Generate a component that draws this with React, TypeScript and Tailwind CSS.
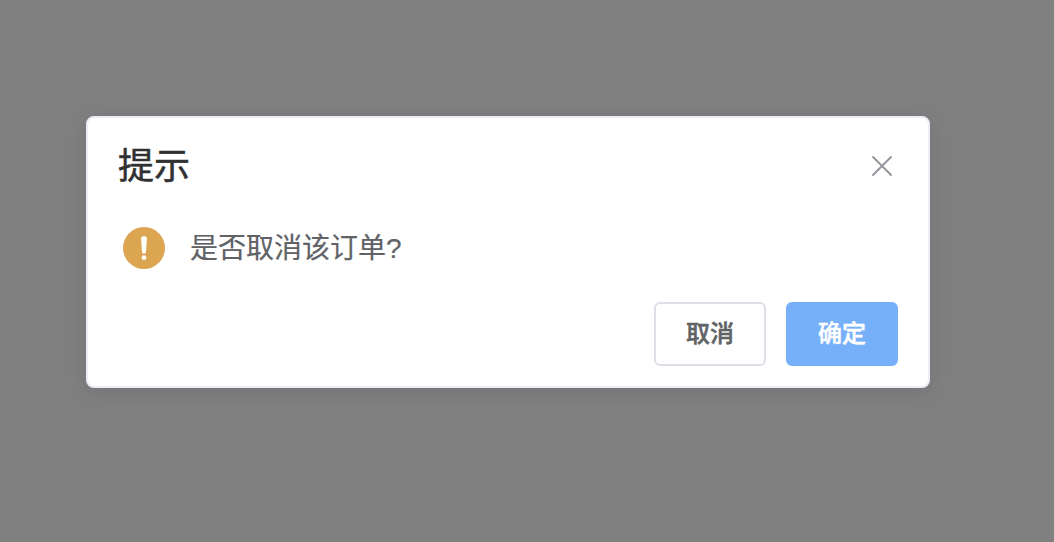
import type { ReactNode } from "react";

interface DialogButtonProps {
  primary?: boolean;
  children: ReactNode;
}

function DialogButton({ primary = false, children }: DialogButtonProps) {
  const tone = primary
    ? "border-[#76b0f9] bg-[#76b0f9] text-white"
    : "border-[#dcdfe6] bg-white text-[#606266]";

  return (
    <button
      className={`flex h-16 w-28 items-center justify-center rounded-md border-2 text-2xl leading-none font-medium [-webkit-text-stroke:0.5px] ${tone}`}
    >
      {children}
    </button>
  );
}

function CloseIcon() {
  return (
    <svg width="20" height="20" viewBox="0 0 20 20" fill="none" stroke="#909399" strokeWidth="1.8" strokeLinecap="round">
      <path d="M1 1L19 19M19 1L1 19" />
    </svg>
  );
}

function WarningIcon() {
  return (
    <svg width="42" height="42" viewBox="0 0 42 42" className="shrink-0">
      <circle cx="21" cy="21" r="21" fill="#dca550" />
      <path d="M18.1 11.8C18 10 19.2 9 21 9s3 1 2.9 2.8l-.9 12.7c-.1 1.5-.8 2.2-2 2.2s-1.9-.7-2-2.2z" fill="#fff" />
      <circle cx="21" cy="30.7" r="2.4" fill="#fff" />
    </svg>
  );
}

export default function App() {
  return (
    <div className="flex h-screen w-screen items-start overflow-hidden bg-[#808080] pt-[116px] pl-[86px] font-['Liberation_Sans','Noto_Sans_CJK_SC',sans-serif]">
      <div
        role="dialog"
        aria-labelledby="dialog-title"
        className="flex h-[272px] w-[844px] flex-col rounded-lg border-2 border-[#ebeef5] bg-white shadow-[0_4px_24px_rgba(0,0,0,0.1)]"
      >
        {/* Header */}
        <div className="flex h-24 items-center justify-between pr-9 pl-[30px]">
          <h1 id="dialog-title" className="pt-0.5 text-4xl leading-none text-[#303133] [-webkit-text-stroke:0.5px]">
            提示
          </h1>
          <button aria-label="关闭">
            <CloseIcon />
          </button>
        </div>

        {/* Message */}
        <div className="flex h-[68px] items-center gap-[25px] pl-[35px]">
          <WarningIcon />
          <p className="pt-0.5 text-[28px] leading-none text-[#606266] [-webkit-text-stroke:0.2px]">是否取消该订单?</p>
        </div>

        {/* Actions */}
        <div className="flex justify-end gap-5 pt-5 pr-[30px]">
          <DialogButton>取消</DialogButton>
          <DialogButton primary>确定</DialogButton>
        </div>
      </div>
    </div>
  );
}
